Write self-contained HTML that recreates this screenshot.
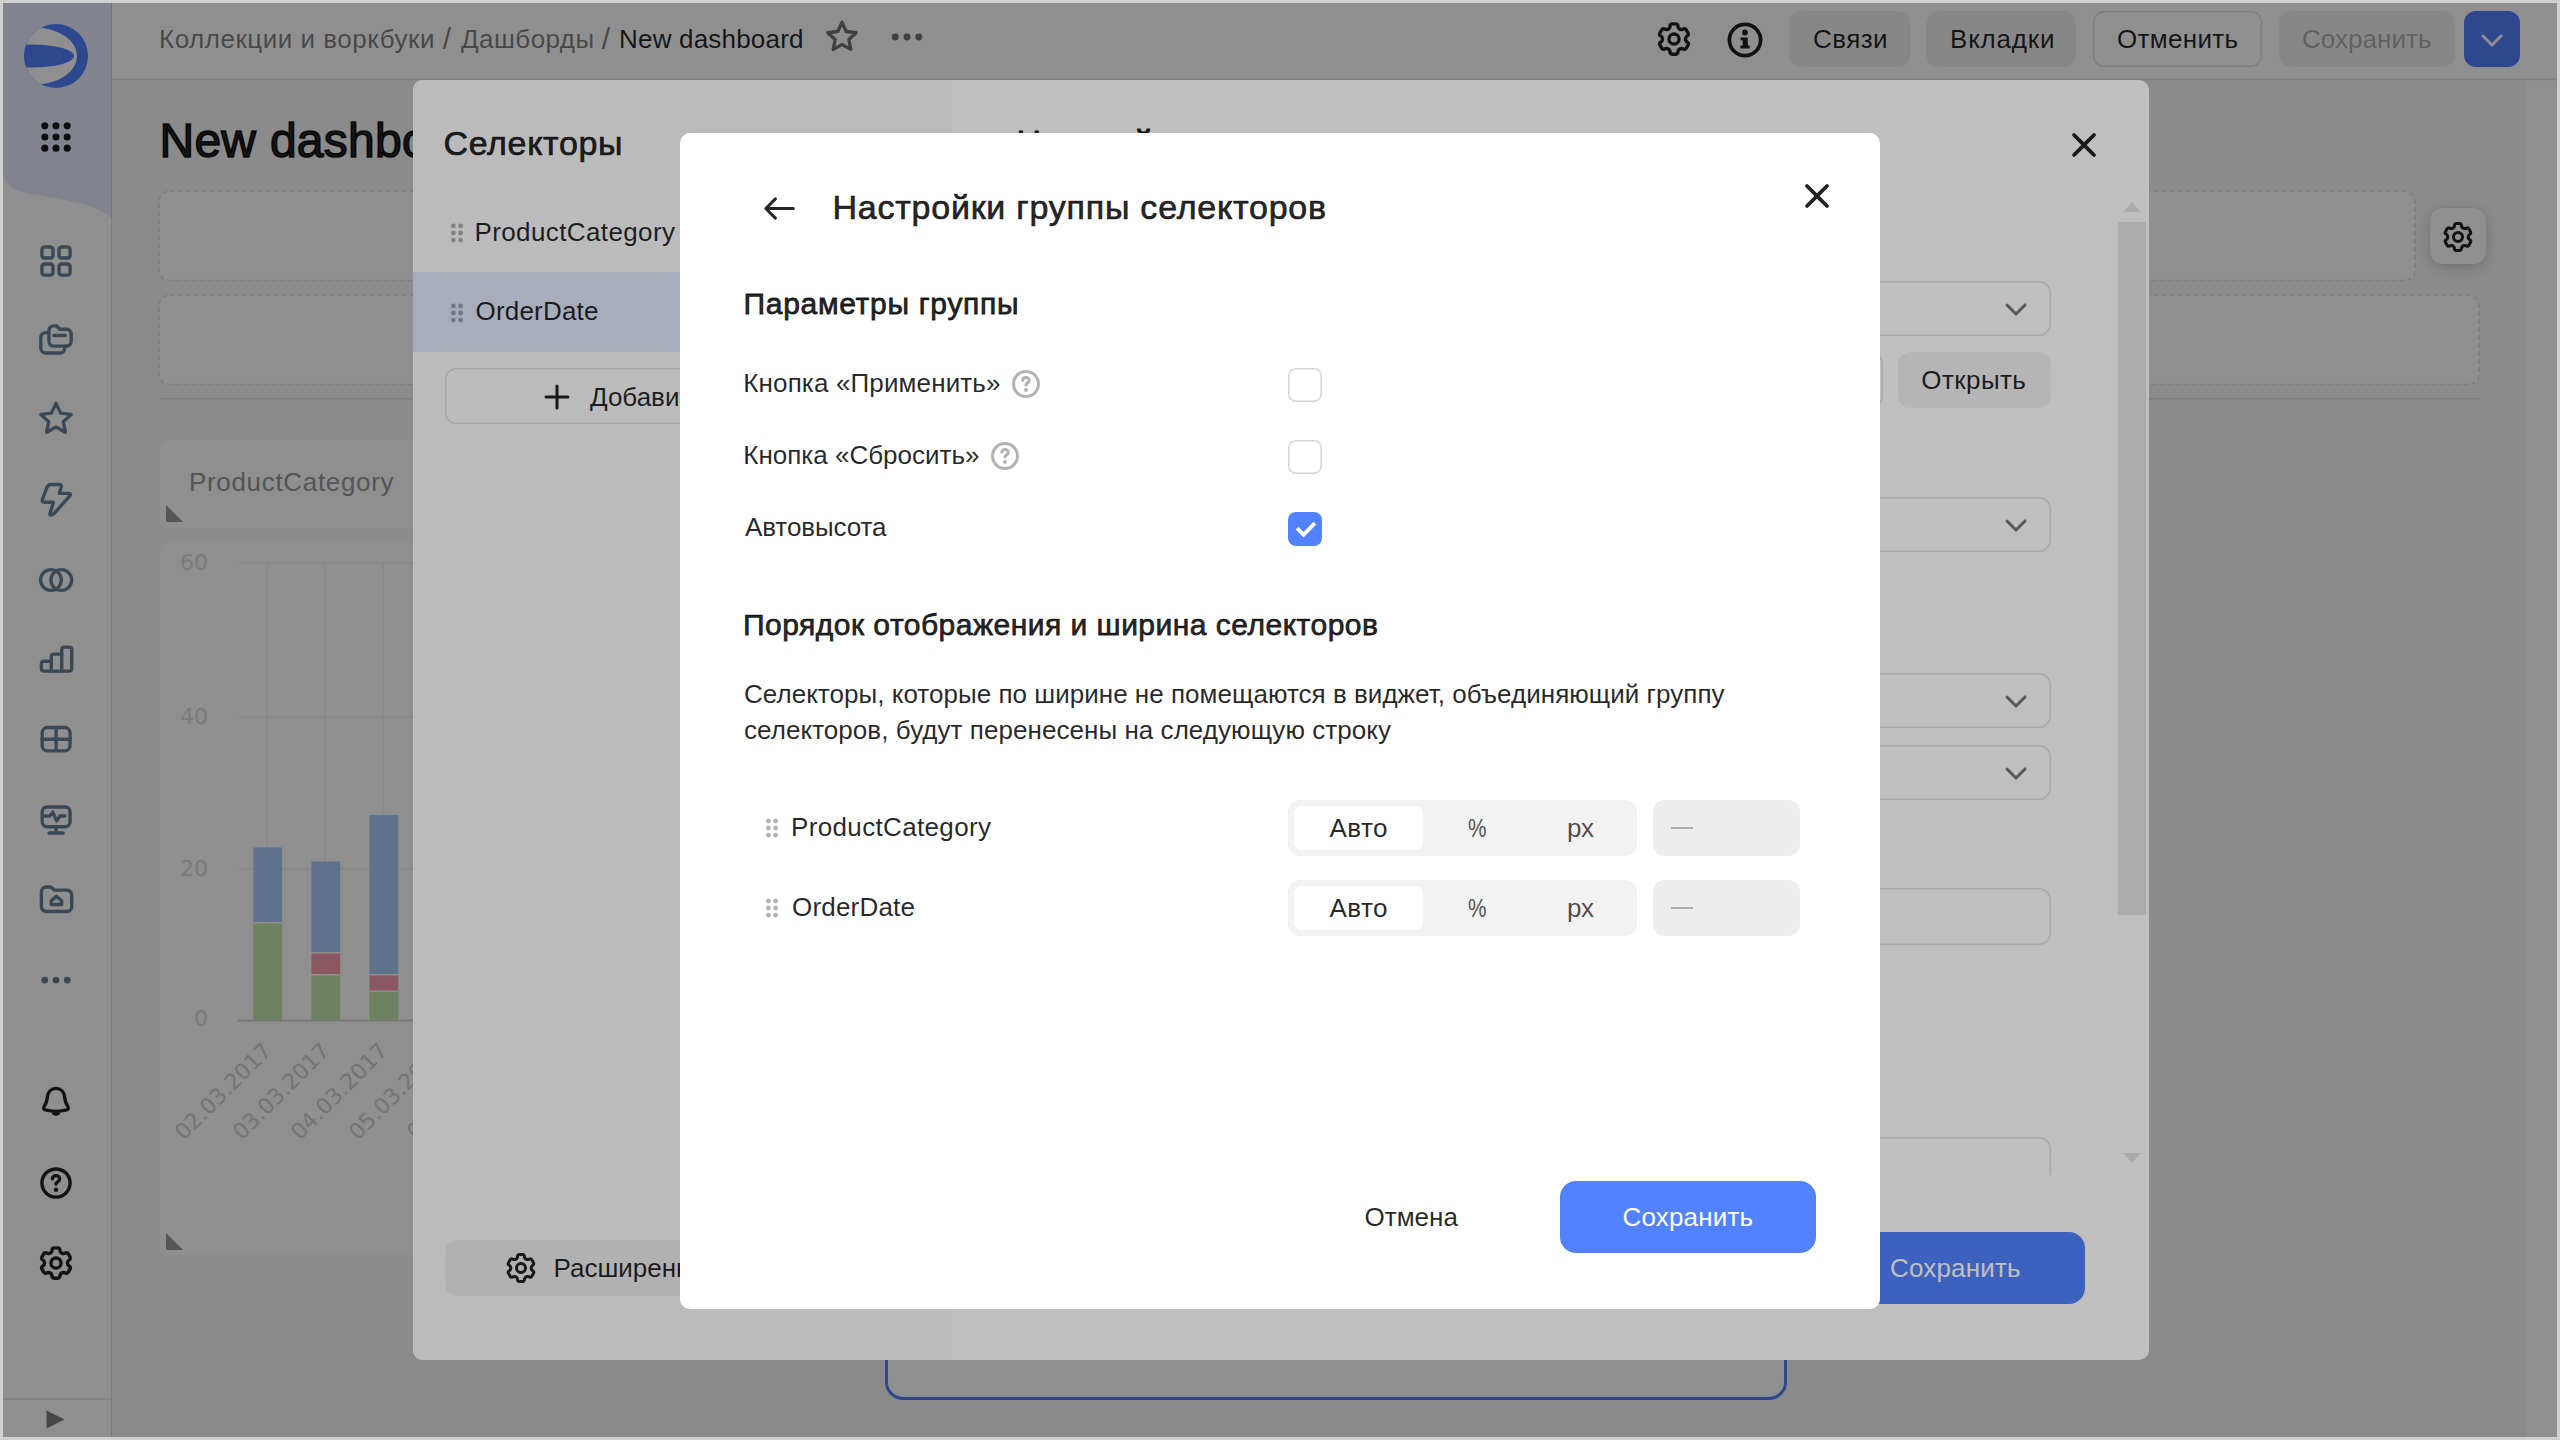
<!DOCTYPE html>
<html lang="ru"><head><meta charset="utf-8"><title>New dashboard</title>
<style>
html,body{margin:0;padding:0;}
body{width:2560px;height:1440px;overflow:hidden;position:relative;background:#fff;font-family:"Liberation Sans",sans-serif;}
.layer{position:absolute;left:0;top:0;width:2560px;height:1440px;overflow:hidden;}
.t{position:absolute;white-space:nowrap;line-height:1;margin:0;padding:0;border:0;background:none;font-family:inherit;font-weight:400;text-align:left;text-decoration:none;display:block;}
.b{position:absolute;box-sizing:border-box;}
.i{position:absolute;display:block;overflow:visible;}
.ov{position:absolute;left:0;top:0;width:2560px;height:1440px;background:rgba(0,0,0,.25);}
</style></head><body>
<div class="layer" id="page">
<div class="b " style="left:112px;top:80px;width:2448px;height:1360px;background:#f9f9f9;"></div>
<div class="b " style="left:2526px;top:80px;width:34px;height:1360px;background:#fff;"></div>
<svg class="i" style="left:112px;top:76px" width="2448" height="6" viewBox="0 0 2448 6"><rect x="0" y="2.600" width="2448" height="1.600" fill="rgba(0,0,0,.1)"/></svg>
<div class="b " style="left:0px;top:0px;width:112px;height:1440px;background:#fff;"></div>
<svg class="i" style="left:0;top:0" width="112" height="240" viewBox="0 0 112 240"><path fill="#e7edff" d="M0 0H112V218.600C104 212 92 206 80 203.300C62 199 40 196 26 193C12 190 4.500 183 2 171L0 160Z"/></svg>
<div class="b " style="left:111px;top:0px;width:1px;height:1440px;background:rgba(0,0,0,.13);"></div>
<svg class="i" style="left:24px;top:24px" width="64" height="64" viewBox="0 0 64 64"><defs><linearGradient id="lg" x1="0" y1="0" x2="1" y2="0"><stop offset="0" stop-color="#e7edff"/><stop offset=".55" stop-color="#ffffff"/></linearGradient><clipPath id="lc"><circle cx="32" cy="32" r="32"/></clipPath></defs><circle cx="32" cy="32" r="32" fill="#5282ff"/><g clip-path="url(#lc)"><ellipse cx="11" cy="32" rx="42" ry="28.5" fill="url(#lg)"/><ellipse cx="8" cy="32" rx="42" ry="11.5" fill="#5282ff"/></g></svg>
<svg class="i" style="left:40.40px;top:120.80px;color:#1c1c1c;" width="32" height="32" viewBox="0 0 16 16"><circle cx="2.42" cy="2.42" r="1.78" fill="currentColor"/><circle cx="2.42" cy="8" r="1.78" fill="currentColor"/><circle cx="2.42" cy="13.58" r="1.78" fill="currentColor"/><circle cx="8" cy="2.42" r="1.78" fill="currentColor"/><circle cx="8" cy="8" r="1.78" fill="currentColor"/><circle cx="8" cy="13.58" r="1.78" fill="currentColor"/><circle cx="13.58" cy="2.42" r="1.78" fill="currentColor"/><circle cx="13.58" cy="8" r="1.78" fill="currentColor"/><circle cx="13.58" cy="13.58" r="1.78" fill="currentColor"/></svg>
<svg class="i" style="left:38.00px;top:243.00px;color:#68809a;" width="36" height="36" viewBox="0 0 16 16"><g fill="none" stroke="currentColor" stroke-width="1.5" stroke-linecap="round" stroke-linejoin="round"><rect x="1.75" y="1.75" width="4.9" height="4.9" rx="1.1"/><rect x="9.35" y="1.75" width="4.9" height="4.9" rx="1.1"/><rect x="1.75" y="9.35" width="4.9" height="4.9" rx="1.1"/><rect x="9.35" y="9.35" width="4.9" height="4.9" rx="1.1"/></g></svg>
<svg class="i" style="left:38.00px;top:322.00px;color:#68809a;" width="36" height="36" viewBox="0 0 16 16"><g fill="none" stroke="currentColor" stroke-width="1.5" stroke-linecap="round" stroke-linejoin="round"><path d="M4.7 4.7H3.4A2.15 2.15 0 0 0 1.25 6.85v4.8A2.15 2.15 0 0 0 3.4 13.8h6.3a2.15 2.15 0 0 0 2.15-2.1v-1"/><path d="M4.85 3.8A2.1 2.1 0 0 1 6.95 1.7h1.35l1.3 1.5h3.05a2.1 2.1 0 0 1 2.1 2.1v3.3a2.1 2.1 0 0 1-2.1 2.1h-5.7a2.1 2.1 0 0 1-2.1-2.1Z"/><path d="M7.1 6h5"/></g></svg>
<svg class="i" style="left:38.00px;top:400.50px;color:#68809a;" width="36" height="36" viewBox="0 0 16 16"><path transform="translate(8 7.9) scale(1.07) translate(-8 -7.9)" fill="none" stroke="currentColor" stroke-width="1.4" stroke-linejoin="round" d="M8 1.5l1.9 4.05 4.4.55-3.25 3 .85 4.4L8 11.3 4.1 13.5l.85-4.4-3.25-3 4.4-.55L8 1.5Z"/></svg>
<svg class="i" style="left:38.00px;top:481.00px;color:#68809a;" width="36" height="36" viewBox="0 0 16 16"><g fill="none" stroke="currentColor" stroke-width="1.5" stroke-linecap="round" stroke-linejoin="round"><path d="M3.89 3.08Q4.45 1.58 6.05 1.58L9.45 1.58Q10.65 1.58 10.29 2.73L9.48 5.32Q9.42 5.51 9.62 5.51L13.50 5.51Q15.10 5.51 14.04 6.71L7.10 14.54Q6.60 15.10 5.85 15.15L5.85 15.15Q5.10 15.20 5.32 14.48L6.80 9.61Q6.86 9.42 6.66 9.42L3.00 9.42Q1.50 9.42 2.03 8.02Z"/></g></svg>
<svg class="i" style="left:38.00px;top:561.70px;color:#68809a;" width="36" height="36" viewBox="0 0 16 16"><g fill="none" stroke="currentColor" stroke-width="1.5" stroke-linecap="round" stroke-linejoin="round"><circle cx="5.75" cy="8" r="4.6"/><circle cx="10.35" cy="8" r="4.6"/></g></svg>
<svg class="i" style="left:38.00px;top:641.30px;color:#68809a;" width="36" height="36" viewBox="0 0 16 16"><g fill="none" stroke="currentColor" stroke-width="1.5" stroke-linecap="round" stroke-linejoin="round"><path d="M1.50 10.20Q1.50 9.00 2.70 9.00L5.80 9.00Q5.90 9.00 5.90 8.90L5.90 7.05Q5.90 5.85 7.10 5.85L10.45 5.85Q10.55 5.85 10.55 5.75L10.55 3.90Q10.55 2.70 11.75 2.70L13.80 2.70Q15.00 2.70 15.00 3.90L15.00 12.20Q15.00 13.40 13.80 13.40L2.70 13.40Q1.50 13.40 1.50 12.20Z"/><path d="M5.9 9v4.4M10.55 5.85v7.55"/></g></svg>
<svg class="i" style="left:38.00px;top:721.00px;color:#68809a;" width="36" height="36" viewBox="0 0 16 16"><g fill="none" stroke="currentColor" stroke-width="1.5" stroke-linecap="round" stroke-linejoin="round"><rect x="1.85" y="2.9" width="12.4" height="10.4" rx="2.4"/><path d="M8.05 2.9v10.4M1.85 8.1h12.4"/></g></svg>
<svg class="i" style="left:38.00px;top:801.50px;color:#68809a;" width="36" height="36" viewBox="0 0 16 16"><g fill="none" stroke="currentColor" stroke-width="1.5" stroke-linecap="round" stroke-linejoin="round"><rect x="1.85" y="2.2" width="12.4" height="8.8" rx="2.2"/><path d="M8.05 11v2.8M4.9 13.8h6.300"/><path d="M2.2 6.2H5.300L6.600 4.500L8.300 8.400L9.800 6.200H12"/></g></svg>
<svg class="i" style="left:38.00px;top:881.00px;color:#68809a;" width="36" height="36" viewBox="0 0 16 16"><g fill="none" stroke="currentColor" stroke-width="1.5" stroke-linecap="round" stroke-linejoin="round"><path d="M1.5 4.850A2.200 2.200 0 0 1 3.700 2.650h1.900l1.700 1.400h5.500a2.200 2.200 0 0 1 2.200 2.200v5.100a2.200 2.200 0 0 1-2.200 2.200H3.700a2.200 2.200 0 0 1-2.200-2.200Z"/><path d="M5.900 10.450V8.800L8.200 6.800l2.300 2v1.650Z"/></g></svg>
<svg class="i" style="left:38.30px;top:961.70px;color:#68809a;" width="36" height="36" viewBox="0 0 16 16"><circle cx="3" cy="8" r="1.5" fill="currentColor"/><circle cx="8" cy="8" r="1.5" fill="currentColor"/><circle cx="13" cy="8" r="1.5" fill="currentColor"/></svg>
<svg class="i" style="left:38.30px;top:1084.50px;color:#222;" width="36" height="36" viewBox="0 0 16 16"><g fill="none" stroke="currentColor" stroke-width="1.5" stroke-linecap="round" stroke-linejoin="round"><path d="M8 1.500c-2.200 0-3.600 1.700-3.800 3.700-.2 2-.5 3-1.400 4.200-.6.8-.2 1.500.5 1.700 1.500.4 3 .6 4.700.6s3.200-.2 4.700-.6c.7-.2 1.100-.9.500-1.700-.9-1.200-1.200-2.200-1.400-4.200C11.600 3.200 10.200 1.500 8 1.500Z"/></g><path fill="currentColor" d="M6 12.200a2.100 2.100 0 0 0 4 0Z"/></svg>
<svg class="i" style="left:38.00px;top:1164.50px;color:#222;" width="36" height="36" viewBox="0 0 16 16"><path fill="currentColor" fill-rule="evenodd" clip-rule="evenodd" d="M8 13.5a5.5 5.5 0 1 0 0-11 5.5 5.5 0 0 0 0 11ZM8 15A7 7 0 1 0 8 1a7 7 0 0 0 0 14ZM6.44 4.54c.43-.354.994-.565 1.56-.565 1.217 0 2.34.82 2.34 2.14 0 .377-.079.745-.298 1.1-.208.339-.513.614-.875.867-.217.153-.326.257-.379.328-.038.052-.038.07-.038.089a.75.75 0 0 1-1.5 0c0-.794.544-1.286 1.057-1.645.28-.196.4-.332.458-.426a.543.543 0 0 0 .075-.313c0-.3-.243-.64-.84-.64a.98.98 0 0 0-.609.223c-.167.138-.231.287-.231.417a.75.75 0 0 1-1.5 0c0-.673.345-1.22.78-1.576ZM9 11a1 1 0 1 1-2 0 1 1 0 0 1 2 0Z"/></svg>
<svg class="i" style="left:38.10px;top:1245.00px;color:#222;" width="36" height="36" viewBox="0 0 16 16"><path fill="currentColor" fill-rule="evenodd" clip-rule="evenodd" d="M7.199 2H8.8a.2.2 0 0 1 .2.2c0 1.808 1.958 2.939 3.524 2.034a.199.199 0 0 1 .271.073l.802 1.388a.199.199 0 0 1-.073.272c-1.566.904-1.566 3.164 0 4.069a.199.199 0 0 1 .073.271l-.802 1.388a.199.199 0 0 1-.271.073C10.958 10.863 9 11.993 9 13.8a.2.2 0 0 1-.199.2H7.2a.199.199 0 0 1-.2-.2c0-1.808-1.958-2.938-3.524-2.034a.199.199 0 0 1-.272-.073l-.8-1.388a.199.199 0 0 1 .072-.271c1.566-.905 1.566-3.165 0-4.07a.199.199 0 0 1-.073-.271l.801-1.388a.199.199 0 0 1 .272-.073C5.042 5.138 7 4.007 7 2.2c0-.11.089-.199.199-.199ZM5.5 2.2c0-.94.76-1.7 1.699-1.7H8.8c.94 0 1.7.76 1.7 1.7a.85.85 0 0 0 1.274.735 1.699 1.699 0 0 1 2.32.622l.802 1.388c.469.813.19 1.851-.622 2.32a.85.85 0 0 0 0 1.472 1.7 1.7 0 0 1 .622 2.32l-.802 1.388a1.699 1.699 0 0 1-2.32.622.85.85 0 0 0-1.274.735c0 .939-.76 1.7-1.699 1.7H7.2a1.7 1.7 0 0 1-1.699-1.7.85.85 0 0 0-1.274-.735 1.698 1.698 0 0 1-2.32-.622l-.802-1.388a1.699 1.699 0 0 1 .622-2.32.85.85 0 0 0 0-1.471 1.699 1.699 0 0 1-.622-2.321l.801-1.388a1.699 1.699 0 0 1 2.32-.622A.85.85 0 0 0 5.5 2.2Zm4 5.8a1.5 1.5 0 1 1-3 0 1.5 1.5 0 0 1 3 0ZM11 8a3 3 0 1 1-6 0 3 3 0 0 1 6 0Z"/></svg>
<svg class="i" style="left:0;top:1396px" width="111" height="6" viewBox="0 0 111 6"><rect x="0" y="2.200" width="111" height="1.500" fill="rgba(0,0,0,.1)"/></svg>
<svg class="i" style="left:46px;top:1410px" width="19" height="19" viewBox="0 0 19 19"><path fill="#7f7f7f" d="M0.5 0.500L18.5 9.500L0.5 18.500Z"/></svg>
<a class="t" style="left:159.00px;top:26.00px;font-size:26px;color:rgba(0,0,0,.5);letter-spacing:0.516px;">Коллекции и воркбуки</a>
<div class="t" style="left:442.80px;top:24.00px;font-size:30px;color:rgba(0,0,0,.5);letter-spacing:0.000px;">/</div>
<a class="t" style="left:461.00px;top:26.00px;font-size:26px;color:rgba(0,0,0,.5);letter-spacing:0.455px;">Дашборды</a>
<div class="t" style="left:601.80px;top:24.00px;font-size:30px;color:rgba(0,0,0,.5);letter-spacing:0.000px;">/</div>
<div class="t" style="left:619.00px;top:26.00px;font-size:26px;color:rgba(0,0,0,.85);letter-spacing:0.195px;">New dashboard</div>
<svg class="i" style="left:823.50px;top:18.50px;color:rgba(0,0,0,.55);" width="36" height="36" viewBox="0 0 16 16"><path fill="none" stroke="currentColor" stroke-width="1.5" stroke-linejoin="round" d="M8 1.5l1.9 4.05 4.4.55-3.25 3 .85 4.4L8 11.3 4.1 13.5l.85-4.4-3.25-3 4.4-.55L8 1.5Z"/></svg>
<svg class="i" style="left:891.00px;top:21.00px;color:rgba(0,0,0,.55);" width="32" height="32" viewBox="0 0 16 16"><circle cx="2.1" cy="8" r="1.72" fill="currentColor"/><circle cx="8" cy="8" r="1.72" fill="currentColor"/><circle cx="13.9" cy="8" r="1.72" fill="currentColor"/></svg>
<svg class="i" style="left:1655.50px;top:21.00px;color:#222;" width="36" height="36" viewBox="0 0 16 16"><path fill="currentColor" fill-rule="evenodd" clip-rule="evenodd" d="M7.199 2H8.8a.2.2 0 0 1 .2.2c0 1.808 1.958 2.939 3.524 2.034a.199.199 0 0 1 .271.073l.802 1.388a.199.199 0 0 1-.073.272c-1.566.904-1.566 3.164 0 4.069a.199.199 0 0 1 .073.271l-.802 1.388a.199.199 0 0 1-.271.073C10.958 10.863 9 11.993 9 13.8a.2.2 0 0 1-.199.2H7.2a.199.199 0 0 1-.2-.2c0-1.808-1.958-2.938-3.524-2.034a.199.199 0 0 1-.272-.073l-.8-1.388a.199.199 0 0 1 .072-.271c1.566-.905 1.566-3.165 0-4.07a.199.199 0 0 1-.073-.271l.801-1.388a.199.199 0 0 1 .272-.073C5.042 5.138 7 4.007 7 2.2c0-.11.089-.199.199-.199ZM5.5 2.2c0-.94.76-1.7 1.699-1.7H8.8c.94 0 1.7.76 1.7 1.7a.85.85 0 0 0 1.274.735 1.699 1.699 0 0 1 2.32.622l.802 1.388c.469.813.19 1.851-.622 2.32a.85.85 0 0 0 0 1.472 1.7 1.7 0 0 1 .622 2.32l-.802 1.388a1.699 1.699 0 0 1-2.32.622.85.85 0 0 0-1.274.735c0 .939-.76 1.7-1.699 1.7H7.2a1.7 1.7 0 0 1-1.699-1.7.85.85 0 0 0-1.274-.735 1.698 1.698 0 0 1-2.32-.622l-.802-1.388a1.699 1.699 0 0 1 .622-2.32.85.85 0 0 0 0-1.471 1.699 1.699 0 0 1-.622-2.321l.801-1.388a1.699 1.699 0 0 1 2.32-.622A.85.85 0 0 0 5.5 2.2Zm4 5.8a1.5 1.5 0 1 1-3 0 1.5 1.5 0 0 1 3 0ZM11 8a3 3 0 1 1-6 0 3 3 0 0 1 6 0Z"/></svg>
<svg class="i" style="left:1724.50px;top:19.50px;color:#222;" width="40" height="40" viewBox="0 0 16 16"><path fill="currentColor" fill-rule="evenodd" clip-rule="evenodd" d="M8 13.5a5.5 5.5 0 1 0 0-11 5.5 5.5 0 0 0 0 11ZM8 15A7 7 0 1 0 8 1a7 7 0 0 0 0 14ZM9.150 4.950a1.150 1.150 0 1 1-2.300 0 1.150 1.150 0 0 1 2.300 0ZM6.200 6.950h2.900v3.250h.75v1.150H6.150v-1.150h.9v-2.100h-.85Z"/></svg>
<div class="b " style="left:1789px;top:11px;width:121px;height:56px;background:rgba(0,0,0,.05);border-radius:12px;"></div>
<button class="t" style="left:1813.00px;top:26.10px;font-size:26px;color:rgba(0,0,0,.85);letter-spacing:0.426px;">Связи</button>
<div class="b " style="left:1926px;top:11px;width:150px;height:56px;background:rgba(0,0,0,.05);border-radius:12px;"></div>
<button class="t" style="left:1950.00px;top:26.10px;font-size:26px;color:rgba(0,0,0,.85);letter-spacing:0.802px;">Вкладки</button>
<div class="b " style="left:2093px;top:11px;width:169px;height:56px;box-shadow:inset 0 0 0 1.4px rgba(0,0,0,.12);border-radius:11px;"></div>
<button class="t" style="left:2117.00px;top:26.10px;font-size:26px;color:rgba(0,0,0,.85);letter-spacing:0.320px;">Отменить</button>
<div class="b " style="left:2279px;top:11px;width:176px;height:56px;background:rgba(0,0,0,.05);border-radius:12px;"></div>
<button class="t" style="left:2302.00px;top:26.10px;font-size:26px;color:rgba(0,0,0,.3);letter-spacing:0.043px;">Сохранить</button>
<div class="b " style="left:2464px;top:11px;width:56px;height:56px;background:#5282ff;border-radius:12px;"></div>
<svg class="i" style="left:2476.00px;top:24.00px;color:#fff;" width="32" height="32" viewBox="0 0 16 16"><path fill="currentColor" d="M2.97 5.47a.75.75 0 0 1 1.06 0L8 9.44l3.97-3.97a.75.75 0 1 1 1.06 1.06l-4.5 4.5a.75.75 0 0 1-1.06 0l-4.5-4.5a.75.75 0 0 1 0-1.06Z"/></svg>
<h1 class="t" style="left:159.50px;top:116.50px;font-size:48px;color:rgba(0,0,0,.87);letter-spacing:0.257px;-webkit-text-stroke:1.6px rgba(0,0,0,.87);">New dashboard</h1>
<svg class="i" style="left:0;top:0" width="2560" height="400" viewBox="0 0 2560 400"><g fill="#fff" stroke="rgba(0,0,0,.1)" stroke-width="1.7" stroke-dasharray="5 3"><rect x="159" y="191" width="2256" height="89.500" rx="11"/><rect x="159" y="295" width="2320" height="89.500" rx="11"/></g><rect x="160" y="398.050" width="2319" height="1.500" fill="rgba(0,0,0,.1)"/></svg>
<div class="b " style="left:2430px;top:208px;width:56px;height:56px;background:#fff;border-radius:12px;box-shadow:0 4px 16px rgba(0,0,0,.18),0 0 2px rgba(0,0,0,.12);"></div>
<svg class="i" style="left:2441.50px;top:220.70px;color:#222;" width="32" height="32" viewBox="0 0 16 16"><path fill="currentColor" fill-rule="evenodd" clip-rule="evenodd" d="M7.199 2H8.8a.2.2 0 0 1 .2.2c0 1.808 1.958 2.939 3.524 2.034a.199.199 0 0 1 .271.073l.802 1.388a.199.199 0 0 1-.073.272c-1.566.904-1.566 3.164 0 4.069a.199.199 0 0 1 .073.271l-.802 1.388a.199.199 0 0 1-.271.073C10.958 10.863 9 11.993 9 13.8a.2.2 0 0 1-.199.2H7.2a.199.199 0 0 1-.2-.2c0-1.808-1.958-2.938-3.524-2.034a.199.199 0 0 1-.272-.073l-.8-1.388a.199.199 0 0 1 .072-.271c1.566-.905 1.566-3.165 0-4.07a.199.199 0 0 1-.073-.271l.801-1.388a.199.199 0 0 1 .272-.073C5.042 5.138 7 4.007 7 2.2c0-.11.089-.199.199-.199ZM5.5 2.2c0-.94.76-1.7 1.699-1.7H8.8c.94 0 1.7.76 1.7 1.7a.85.85 0 0 0 1.274.735 1.699 1.699 0 0 1 2.32.622l.802 1.388c.469.813.19 1.851-.622 2.32a.85.85 0 0 0 0 1.472 1.7 1.7 0 0 1 .622 2.32l-.802 1.388a1.699 1.699 0 0 1-2.32.622.85.85 0 0 0-1.274.735c0 .939-.76 1.7-1.699 1.7H7.2a1.7 1.7 0 0 1-1.699-1.7.85.85 0 0 0-1.274-.735 1.698 1.698 0 0 1-2.32-.622l-.802-1.388a1.699 1.699 0 0 1 .622-2.32.85.85 0 0 0 0-1.471 1.699 1.699 0 0 1-.622-2.321l.801-1.388a1.699 1.699 0 0 1 2.32-.622A.85.85 0 0 0 5.5 2.2Zm4 5.8a1.5 1.5 0 1 1-3 0 1.5 1.5 0 0 1 3 0ZM11 8a3 3 0 1 1-6 0 3 3 0 0 1 6 0Z"/></svg>
<div class="b " style="left:160px;top:440px;width:1240px;height:88px;background:#fff;border-radius:8px;"></div>
<div class="t" style="left:189.00px;top:468.80px;font-size:26px;color:#999;letter-spacing:0.671px;">ProductCategory</div>
<svg class="i" style="left:166px;top:505px" width="17" height="17" viewBox="0 0 17 17"><path fill="#999" d="M0 0L17 17H0Z"/></svg>
<div class="b " style="left:160px;top:543px;width:1240px;height:712px;background:#fff;border-radius:8px;"></div>
<svg class="i" style="left:166px;top:1233px" width="17" height="17" viewBox="0 0 17 17"><path fill="#999" d="M0 0L17 17H0Z"/></svg>
<svg class="i" style="left:0;top:0" width="1400" height="1440" viewBox="0 0 1400 1440" font-family="DejaVu Sans, Liberation Sans, sans-serif"><rect x="238" y="562" width="1100" height="2" fill="#f3f3f3"/><rect x="238" y="716" width="1100" height="2" fill="#f3f3f3"/><rect x="238" y="868" width="1100" height="2" fill="#f3f3f3"/><rect x="266.4" y="563" width="1.6" height="457" fill="#f3f3f3"/><rect x="324.4" y="563" width="1.6" height="457" fill="#f3f3f3"/><rect x="382.4" y="563" width="1.6" height="457" fill="#f3f3f3"/><rect x="440.4" y="563" width="1.6" height="457" fill="#f3f3f3"/><rect x="498.4" y="563" width="1.6" height="457" fill="#f3f3f3"/><rect x="556.4" y="563" width="1.6" height="457" fill="#f3f3f3"/><rect x="238" y="1019.5" width="1100" height="2" fill="#d6d6d6"/><text x="208" y="570" text-anchor="end" font-size="22" fill="#dcdcdc">60</text><text x="208" y="724" text-anchor="end" font-size="22" fill="#dcdcdc">40</text><text x="208" y="876" text-anchor="end" font-size="22" fill="#dcdcdc">20</text><text x="208" y="1026" text-anchor="end" font-size="22" fill="#dcdcdc">0</text><rect x="253.3" y="847.5" width="28.8" height="74.5" fill="#aacbf8"/><rect x="253.3" y="923.5" width="28.8" height="96.5" fill="#c4e9ae"/><rect x="311.4" y="861.5" width="28.8" height="90.5" fill="#aacbf8"/><rect x="311.4" y="953.5" width="28.8" height="20.5" fill="#f99cb0"/><rect x="311.4" y="975.5" width="28.8" height="44.5" fill="#c4e9ae"/><rect x="369.5" y="815" width="28.8" height="159" fill="#aacbf8"/><rect x="369.5" y="975.5" width="28.8" height="15.0" fill="#f99cb0"/><rect x="369.5" y="992" width="28.8" height="28" fill="#c4e9ae"/><rect x="427.3" y="900" width="28.8" height="90" fill="#aacbf8"/><rect x="427.3" y="992" width="28.8" height="28" fill="#c4e9ae"/><text x="273.0" y="1052" text-anchor="end" font-size="22" fill="#d2d2d2" transform="rotate(-45 273.0 1052)">02.03.2017</text><text x="331.0" y="1052" text-anchor="end" font-size="22" fill="#d2d2d2" transform="rotate(-45 331.0 1052)">03.03.2017</text><text x="389.0" y="1052" text-anchor="end" font-size="22" fill="#d2d2d2" transform="rotate(-45 389.0 1052)">04.03.2017</text><text x="447.0" y="1052" text-anchor="end" font-size="22" fill="#d2d2d2" transform="rotate(-45 447.0 1052)">05.03.2017</text><text x="505.0" y="1052" text-anchor="end" font-size="22" fill="#d2d2d2" transform="rotate(-45 505.0 1052)">06.03.2017</text></svg>
<div class="b " style="left:885px;top:1300px;width:902px;height:100px;background:#fff;border:3px solid #5282ff;border-radius:18px;"></div>
</div>
<div class="ov"></div>
<div class="layer" id="dlg1">
<div class="b " style="left:413px;top:80px;width:1736px;height:1280px;background:#fff;border-radius:10px;"></div>
<div class="b " style="left:413px;top:80px;width:539px;height:1280px;background:#fafafa;border-radius:10px 0 0 10px;"></div>
<h2 class="t" style="left:443.50px;top:125.50px;font-size:34px;color:rgba(0,0,0,.85);letter-spacing:0.644px;-webkit-text-stroke:0.7px rgba(0,0,0,.85);">Селекторы</h2>
<h2 class="t" style="left:1016.50px;top:124.90px;font-size:34px;color:rgba(0,0,0,.85);letter-spacing:0.608px;-webkit-text-stroke:1.0px rgba(0,0,0,.85);">Настройки селектора</h2>
<svg class="i" style="left:2064.00px;top:124.50px;color:#222;" width="40" height="40" viewBox="0 0 16 16"><path fill="currentColor" d="M3.47 3.47a.75.75 0 0 1 1.06 0L8 6.94l3.47-3.47a.75.75 0 1 1 1.06 1.06L9.06 8l3.47 3.47a.75.75 0 1 1-1.06 1.06L8 9.06l-3.47 3.47a.75.75 0 0 1-1.06-1.06L6.94 8 3.47 4.53a.75.75 0 0 1 0-1.06Z"/></svg>
<svg class="i" style="left:441.00px;top:216.50px;color:rgba(0,0,0,.3);" width="32" height="32" viewBox="0 0 16 16"><circle cx="6.2" cy="4.45" r="1.22" fill="currentColor"/><circle cx="6.2" cy="8" r="1.22" fill="currentColor"/><circle cx="6.2" cy="11.55" r="1.22" fill="currentColor"/><circle cx="9.8" cy="4.45" r="1.22" fill="currentColor"/><circle cx="9.8" cy="8" r="1.22" fill="currentColor"/><circle cx="9.8" cy="11.55" r="1.22" fill="currentColor"/></svg>
<div class="t" style="left:474.50px;top:218.50px;font-size:26px;color:rgba(0,0,0,.85);letter-spacing:0.386px;">ProductCategory</div>
<div class="b " style="left:413px;top:272px;width:539px;height:80px;background:rgba(82,130,255,.15);"></div>
<svg class="i" style="left:441.00px;top:296.50px;color:rgba(0,0,0,.3);" width="32" height="32" viewBox="0 0 16 16"><circle cx="6.2" cy="4.45" r="1.22" fill="currentColor"/><circle cx="6.2" cy="8" r="1.22" fill="currentColor"/><circle cx="6.2" cy="11.55" r="1.22" fill="currentColor"/><circle cx="9.8" cy="4.45" r="1.22" fill="currentColor"/><circle cx="9.8" cy="8" r="1.22" fill="currentColor"/><circle cx="9.8" cy="11.55" r="1.22" fill="currentColor"/></svg>
<div class="t" style="left:475.50px;top:297.70px;font-size:26px;color:rgba(0,0,0,.85);letter-spacing:0.198px;">OrderDate</div>
<div class="b " style="left:445px;top:368px;width:475px;height:56px;box-shadow:inset 0 0 0 1.4px rgba(0,0,0,.12);border-radius:11px;"></div>
<svg class="i" style="left:541.00px;top:380.70px;color:#222;" width="32" height="32" viewBox="0 0 16 16"><path fill="currentColor" d="M8 1.75a.75.75 0 0 1 .75.75v4.75h4.75a.75.75 0 0 1 0 1.5H8.75v4.75a.75.75 0 0 1-1.5 0V8.75H2.5a.75.75 0 0 1 0-1.5h4.75V2.5A.75.75 0 0 1 8 1.75Z"/></svg>
<button class="t" style="left:590.00px;top:383.80px;font-size:26px;color:rgba(0,0,0,.85);letter-spacing:0.000px;">Добавить селектор</button>
<div class="b " style="left:445px;top:1240px;width:475px;height:56px;background:rgba(0,0,0,.05);border-radius:12px;"></div>
<svg class="i" style="left:505.00px;top:1252.00px;color:#222;" width="32" height="32" viewBox="0 0 16 16"><path fill="currentColor" fill-rule="evenodd" clip-rule="evenodd" d="M7.199 2H8.8a.2.2 0 0 1 .2.2c0 1.808 1.958 2.939 3.524 2.034a.199.199 0 0 1 .271.073l.802 1.388a.199.199 0 0 1-.073.272c-1.566.904-1.566 3.164 0 4.069a.199.199 0 0 1 .073.271l-.802 1.388a.199.199 0 0 1-.271.073C10.958 10.863 9 11.993 9 13.8a.2.2 0 0 1-.199.2H7.2a.199.199 0 0 1-.2-.2c0-1.808-1.958-2.938-3.524-2.034a.199.199 0 0 1-.272-.073l-.8-1.388a.199.199 0 0 1 .072-.271c1.566-.905 1.566-3.165 0-4.07a.199.199 0 0 1-.073-.271l.801-1.388a.199.199 0 0 1 .272-.073C5.042 5.138 7 4.007 7 2.2c0-.11.089-.199.199-.199ZM5.5 2.2c0-.94.76-1.7 1.699-1.7H8.8c.94 0 1.7.76 1.7 1.7a.85.85 0 0 0 1.274.735 1.699 1.699 0 0 1 2.32.622l.802 1.388c.469.813.19 1.851-.622 2.32a.85.85 0 0 0 0 1.472 1.7 1.7 0 0 1 .622 2.32l-.802 1.388a1.699 1.699 0 0 1-2.32.622.85.85 0 0 0-1.274.735c0 .939-.76 1.7-1.699 1.7H7.2a1.7 1.7 0 0 1-1.699-1.7.85.85 0 0 0-1.274-.735 1.698 1.698 0 0 1-2.32-.622l-.802-1.388a1.699 1.699 0 0 1 .622-2.32.85.85 0 0 0 0-1.471 1.699 1.699 0 0 1-.622-2.321l.801-1.388a1.699 1.699 0 0 1 2.32-.622A.85.85 0 0 0 5.5 2.2Zm4 5.8a1.5 1.5 0 1 1-3 0 1.5 1.5 0 0 1 3 0ZM11 8a3 3 0 1 1-6 0 3 3 0 0 1 6 0Z"/></svg>
<button class="t" style="left:553.50px;top:1255.00px;font-size:26px;color:rgba(0,0,0,.85);letter-spacing:0.000px;">Расширенные настройки</button>
<div class="b " style="left:1300px;top:281px;width:751px;height:55px;box-shadow:inset 0 0 0 1.4px rgba(0,0,0,.12);border-radius:12px;"></div>
<svg class="i" style="left:2000.00px;top:293.00px;color:rgba(0,0,0,.55);" width="32" height="32" viewBox="0 0 16 16"><path fill="currentColor" d="M2.97 5.47a.75.75 0 0 1 1.06 0L8 9.44l3.97-3.97a.75.75 0 1 1 1.06 1.06l-4.5 4.5a.75.75 0 0 1-1.06 0l-4.5-4.5a.75.75 0 0 1 0-1.06Z"/></svg>
<div class="b " style="left:1300px;top:497px;width:751px;height:55px;box-shadow:inset 0 0 0 1.4px rgba(0,0,0,.12);border-radius:12px;"></div>
<svg class="i" style="left:2000.00px;top:509.00px;color:rgba(0,0,0,.55);" width="32" height="32" viewBox="0 0 16 16"><path fill="currentColor" d="M2.97 5.47a.75.75 0 0 1 1.06 0L8 9.44l3.97-3.97a.75.75 0 1 1 1.06 1.06l-4.5 4.5a.75.75 0 0 1-1.06 0l-4.5-4.5a.75.75 0 0 1 0-1.06Z"/></svg>
<div class="b " style="left:1300px;top:673px;width:751px;height:55px;box-shadow:inset 0 0 0 1.4px rgba(0,0,0,.12);border-radius:12px;"></div>
<svg class="i" style="left:2000.00px;top:685.00px;color:rgba(0,0,0,.55);" width="32" height="32" viewBox="0 0 16 16"><path fill="currentColor" d="M2.97 5.47a.75.75 0 0 1 1.06 0L8 9.44l3.97-3.97a.75.75 0 1 1 1.06 1.06l-4.5 4.5a.75.75 0 0 1-1.06 0l-4.5-4.5a.75.75 0 0 1 0-1.06Z"/></svg>
<div class="b " style="left:1300px;top:745px;width:751px;height:55px;box-shadow:inset 0 0 0 1.4px rgba(0,0,0,.12);border-radius:12px;"></div>
<svg class="i" style="left:2000.00px;top:757.00px;color:rgba(0,0,0,.55);" width="32" height="32" viewBox="0 0 16 16"><path fill="currentColor" d="M2.97 5.47a.75.75 0 0 1 1.06 0L8 9.44l3.97-3.97a.75.75 0 1 1 1.06 1.06l-4.5 4.5a.75.75 0 0 1-1.06 0l-4.5-4.5a.75.75 0 0 1 0-1.06Z"/></svg>
<div class="b " style="left:1300px;top:888px;width:751px;height:57px;box-shadow:inset 0 0 0 1.4px rgba(0,0,0,.12);border-radius:12px;"></div>
<div class="b " style="left:1300px;top:352px;width:583px;height:56px;box-shadow:inset 0 0 0 1.4px rgba(0,0,0,.12);border-radius:12px;"></div>
<div class="b " style="left:1898px;top:352px;width:153px;height:56px;background:rgba(0,0,0,.05);border-radius:12px;"></div>
<button class="t" style="left:1921.30px;top:367.00px;font-size:26px;color:rgba(0,0,0,.85);letter-spacing:0.406px;">Открыть</button>
<div class="b" style="left:1300px;top:1100px;width:760px;height:75px;overflow:hidden"><div class="b" style="left:0;top:37px;width:751px;height:56px;box-shadow:inset 0 0 0 1.4px rgba(0,0,0,.12);border-radius:12px;"></div></div>
<div class="b " style="left:2118px;top:190px;width:30px;height:986px;background:#fff;"></div>
<div class="b " style="left:2118px;top:222px;width:28px;height:693px;background:rgba(0,0,0,.1);"></div>
<svg class="i" style="left:2123px;top:202px" width="18" height="10" viewBox="0 0 18 10"><path fill="#e4e4e4" d="M9 0L18 10H0Z"/></svg>
<svg class="i" style="left:2123px;top:1153px" width="18" height="10" viewBox="0 0 18 10"><path fill="#e4e4e4" d="M9 10L18 0H0Z"/></svg>
<div class="b " style="left:1700px;top:1232px;width:385px;height:72px;background:#5282ff;border-radius:16px;"></div>
<button class="t" style="left:1890.00px;top:1255.00px;font-size:26px;color:#fff;letter-spacing:0.168px;">Сохранить</button>
</div>
<div class="ov"></div>
<div class="layer" id="dlg2">
<div class="b " style="left:680px;top:133px;width:1200px;height:1176px;background:#fff;border-radius:10px;"></div>
<svg class="i" style="left:760px;top:190px" width="40" height="40" viewBox="760 190 40 40"><path fill="none" stroke="#262626" stroke-width="3" stroke-linecap="round" stroke-linejoin="round" d="M793.3 208.500H766.200M775.400 198.900L765.800 208.500L775.400 218.100"/></svg>
<h2 class="t" style="left:832.50px;top:190.00px;font-size:34px;color:rgba(0,0,0,.85);letter-spacing:0.769px;-webkit-text-stroke:0.7px rgba(0,0,0,.85);">Настройки группы селекторов</h2>
<svg class="i" style="left:1796.50px;top:176.00px;color:#222;" width="40" height="40" viewBox="0 0 16 16"><path fill="currentColor" d="M3.47 3.47a.75.75 0 0 1 1.06 0L8 6.94l3.47-3.47a.75.75 0 1 1 1.06 1.06L9.06 8l3.47 3.47a.75.75 0 1 1-1.06 1.06L8 9.06l-3.47 3.47a.75.75 0 0 1-1.06-1.06L6.94 8 3.47 4.53a.75.75 0 0 1 0-1.06Z"/></svg>
<h3 class="t" style="left:743.50px;top:288.50px;font-size:30px;color:rgba(0,0,0,.85);letter-spacing:0.698px;-webkit-text-stroke:0.8px rgba(0,0,0,.85);">Параметры группы</h3>
<label class="t" style="left:743.30px;top:370.00px;font-size:26px;color:rgba(0,0,0,.85);letter-spacing:0.131px;">Кнопка «Применить»</label>
<svg class="i" style="left:1009.50px;top:368.00px;color:rgba(0,0,0,.3);" width="32" height="32" viewBox="0 0 16 16"><path fill="currentColor" fill-rule="evenodd" clip-rule="evenodd" d="M8 13.5a5.5 5.5 0 1 0 0-11 5.5 5.5 0 0 0 0 11ZM8 15A7 7 0 1 0 8 1a7 7 0 0 0 0 14ZM6.44 4.54c.43-.354.994-.565 1.56-.565 1.217 0 2.34.82 2.34 2.14 0 .377-.079.745-.298 1.1-.208.339-.513.614-.875.867-.217.153-.326.257-.379.328-.038.052-.038.07-.038.089a.75.75 0 0 1-1.5 0c0-.794.544-1.286 1.057-1.645.28-.196.4-.332.458-.426a.543.543 0 0 0 .075-.313c0-.3-.243-.64-.84-.64a.98.98 0 0 0-.609.223c-.167.138-.231.287-.231.417a.75.75 0 0 1-1.5 0c0-.673.345-1.22.78-1.576ZM9 11a1 1 0 1 1-2 0 1 1 0 0 1 2 0Z"/></svg>
<div class="b " style="left:1288px;top:368px;width:34px;height:34px;box-shadow:inset 0 0 0 1.6px rgba(0,0,0,.16);border-radius:8px;"></div>
<label class="t" style="left:743.30px;top:442.00px;font-size:26px;color:rgba(0,0,0,.85);letter-spacing:0.000px;">Кнопка «Сбросить»</label>
<svg class="i" style="left:989.00px;top:440.00px;color:rgba(0,0,0,.3);" width="32" height="32" viewBox="0 0 16 16"><path fill="currentColor" fill-rule="evenodd" clip-rule="evenodd" d="M8 13.5a5.5 5.5 0 1 0 0-11 5.5 5.5 0 0 0 0 11ZM8 15A7 7 0 1 0 8 1a7 7 0 0 0 0 14ZM6.44 4.54c.43-.354.994-.565 1.56-.565 1.217 0 2.34.82 2.34 2.14 0 .377-.079.745-.298 1.1-.208.339-.513.614-.875.867-.217.153-.326.257-.379.328-.038.052-.038.07-.038.089a.75.75 0 0 1-1.5 0c0-.794.544-1.286 1.057-1.645.28-.196.4-.332.458-.426a.543.543 0 0 0 .075-.313c0-.3-.243-.64-.84-.64a.98.98 0 0 0-.609.223c-.167.138-.231.287-.231.417a.75.75 0 0 1-1.5 0c0-.673.345-1.22.78-1.576ZM9 11a1 1 0 1 1-2 0 1 1 0 0 1 2 0Z"/></svg>
<div class="b " style="left:1288px;top:440px;width:34px;height:34px;box-shadow:inset 0 0 0 1.6px rgba(0,0,0,.16);border-radius:8px;"></div>
<label class="t" style="left:745.00px;top:513.70px;font-size:26px;color:rgba(0,0,0,.85);letter-spacing:-0.106px;">Автовысота</label>
<div class="b " style="left:1288px;top:512px;width:34px;height:34px;background:#5282ff;border-radius:8px;"></div>
<svg class="i" style="left:1288px;top:512px" width="34" height="34" viewBox="0 0 34 34"><path fill="#fff" d="M7.6 17.500L10.5 14.900L15.500 19.900L25.500 9.750L28.200 12.500L15.500 25.400Z"/></svg>
<h3 class="t" style="left:743.00px;top:609.80px;font-size:30px;color:rgba(0,0,0,.85);letter-spacing:0.485px;-webkit-text-stroke:0.75px rgba(0,0,0,.85);">Порядок отображения и ширина селекторов</h3>
<p class="t" style="left:744.00px;top:680.80px;font-size:26px;color:rgba(0,0,0,.85);letter-spacing:0.031px;">Селекторы, которые по ширине не помещаются в виджет, объединяющий группу</p>
<p class="t" style="left:744.00px;top:717.40px;font-size:26px;color:rgba(0,0,0,.85);letter-spacing:0.051px;">селекторов, будут перенесены на следующую строку</p>
<svg class="i" style="left:756.00px;top:811.50px;color:rgba(0,0,0,.3);" width="32" height="32" viewBox="0 0 16 16"><circle cx="6.2" cy="4.45" r="1.22" fill="currentColor"/><circle cx="6.2" cy="8" r="1.22" fill="currentColor"/><circle cx="6.2" cy="11.55" r="1.22" fill="currentColor"/><circle cx="9.8" cy="4.45" r="1.22" fill="currentColor"/><circle cx="9.8" cy="8" r="1.22" fill="currentColor"/><circle cx="9.8" cy="11.55" r="1.22" fill="currentColor"/></svg>
<div class="t" style="left:791.00px;top:813.50px;font-size:26px;color:rgba(0,0,0,.85);letter-spacing:0.350px;">ProductCategory</div>
<div class="b " style="left:1288px;top:800px;width:349px;height:56px;background:rgba(0,0,0,.05);border-radius:12px;"></div>
<div class="b " style="left:1294px;top:806px;width:129px;height:44px;background:#fff;border-radius:8px;"></div>
<button class="t" style="left:1329.50px;top:815.00px;font-size:26px;color:rgba(0,0,0,.85);letter-spacing:0.434px;">Авто</button>
<button class="t" style="left:1468.00px;top:815.00px;font-size:26px;color:rgba(0,0,0,.7);letter-spacing:0.000px;transform:scaleX(.8);transform-origin:0 0;">%</button>
<button class="t" style="left:1567.00px;top:815.00px;font-size:26px;color:rgba(0,0,0,.7);letter-spacing:-0.460px;">px</button>
<div class="b " style="left:1653px;top:800px;width:147px;height:56px;background:rgba(0,0,0,.07);border-radius:12px;"></div>
<div class="b " style="left:1671px;top:827px;width:22px;height:2px;background:rgba(0,0,0,.27);"></div>
<svg class="i" style="left:756.00px;top:891.50px;color:rgba(0,0,0,.3);" width="32" height="32" viewBox="0 0 16 16"><circle cx="6.2" cy="4.45" r="1.22" fill="currentColor"/><circle cx="6.2" cy="8" r="1.22" fill="currentColor"/><circle cx="6.2" cy="11.55" r="1.22" fill="currentColor"/><circle cx="9.8" cy="4.45" r="1.22" fill="currentColor"/><circle cx="9.8" cy="8" r="1.22" fill="currentColor"/><circle cx="9.8" cy="11.55" r="1.22" fill="currentColor"/></svg>
<div class="t" style="left:792.00px;top:893.50px;font-size:26px;color:rgba(0,0,0,.85);letter-spacing:0.198px;">OrderDate</div>
<div class="b " style="left:1288px;top:880px;width:349px;height:56px;background:rgba(0,0,0,.05);border-radius:12px;"></div>
<div class="b " style="left:1294px;top:886px;width:129px;height:44px;background:#fff;border-radius:8px;"></div>
<button class="t" style="left:1329.50px;top:895.00px;font-size:26px;color:rgba(0,0,0,.85);letter-spacing:0.434px;">Авто</button>
<button class="t" style="left:1468.00px;top:895.00px;font-size:26px;color:rgba(0,0,0,.7);letter-spacing:0.000px;transform:scaleX(.8);transform-origin:0 0;">%</button>
<button class="t" style="left:1567.00px;top:895.00px;font-size:26px;color:rgba(0,0,0,.7);letter-spacing:-0.460px;">px</button>
<div class="b " style="left:1653px;top:880px;width:147px;height:56px;background:rgba(0,0,0,.07);border-radius:12px;"></div>
<div class="b " style="left:1671px;top:907px;width:22px;height:2px;background:rgba(0,0,0,.27);"></div>
<button class="t" style="left:1364.50px;top:1204.00px;font-size:26px;color:rgba(0,0,0,.85);letter-spacing:0.035px;">Отмена</button>
<div class="b " style="left:1560px;top:1181px;width:256px;height:72px;background:#5282ff;border-radius:16px;"></div>
<button class="t" style="left:1622.50px;top:1204.00px;font-size:26px;color:#fff;letter-spacing:0.168px;">Сохранить</button>
</div>
<div class="b" style="left:0;top:0;width:2560px;height:1440px;border:3px solid #d0d0d0;"></div>
</body></html>
